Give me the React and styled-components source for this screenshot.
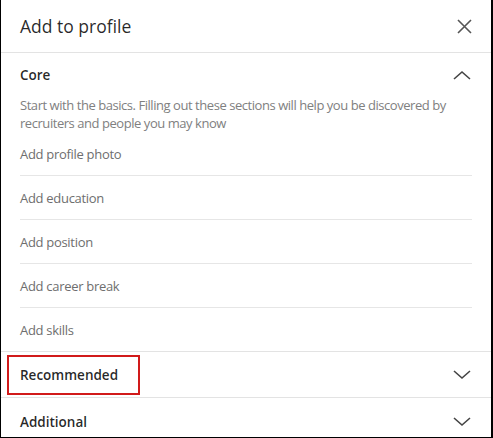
import React from 'react';
import styled, { createGlobalStyle } from 'styled-components';

const Global = createGlobalStyle`
  html, body { margin: 0; padding: 0; background: #fff; }
  body { font-family: "Segoe UI", "Open Sans", "Noto Sans", sans-serif; }
`;

const Modal = styled.div`
  width: 493px;
  height: 438px;
  box-sizing: border-box;
  border-left: 1px solid #000;
  border-right: 2px solid #000;
  border-bottom: 1px solid #000;
  background: #fff;
  overflow: hidden;
  display: flex;
  flex-direction: column;
`;

const Header = styled.div`
  height: 52px;
  flex-shrink: 0;
  display: flex;
  align-items: center;
  justify-content: space-between;
  padding: 0 19px 0 19px;
  border-bottom: 1px solid #e3e3e3;
`;

const Title = styled.h2`
  margin: 0;
  font-size: 17.5px;
  font-weight: 400;
  color: rgba(0, 0, 0, 0.85);
`;

const IconButton = styled.button`
  border: 0;
  background: none;
  padding: 0;
  display: flex;
`;

const Section = styled.div`
  flex-shrink: 0;
  border-bottom: ${p => (p.last ? 'none' : '1px solid #e3e3e3')};
`;

const SectionHead = styled.div`
  height: ${p => p.h}px;
  display: flex;
  align-items: center;
  justify-content: space-between;
  padding: 0 20px 0 19px;
`;

const SectionName = styled.span`
  position: relative;
  font-size: 13.5px;
  line-height: 20px;
  font-weight: 600;
  color: rgba(0, 0, 0, 0.85);
  ${p =>
    p.marked &&
    `
    &::after {
      content: '';
      position: absolute;
      left: -13px;
      right: -22px;
      top: -10px;
      bottom: -10px;
      border: 2px solid #d11a1a;
    }
  `}
`;

const Desc = styled.p`
  margin: 0;
  padding: 0 20px 0 19px;
  font-size: 13px;
  line-height: 18px;
  letter-spacing: -0.45px;
  color: #808080;
`;

const Items = styled.ul`
  list-style: none;
  margin: 0;
  padding: 0 19px;
`;

const Item = styled.li`
  height: 43px;
  display: flex;
  align-items: center;
  font-size: 13px;
  letter-spacing: -0.3px;
  color: #6e6e6e;
  border-bottom: ${p => (p.last ? 'none' : '1px solid #e6e6e6')};
`;

const Chevron = ({ up }) => (
  <svg width="18" height="10" viewBox="0 0 18 10" fill="none">
    <path
      d={up ? 'M1 9 L9 2 L17 9' : 'M1 1 L9 8 L17 1'}
      stroke="#444"
      strokeWidth="1.6"
    />
  </svg>
);

const Close = () => (
  <svg width="15" height="15" viewBox="0 0 15 15" fill="none">
    <path d="M1 1 L14 14 M14 1 L1 14" stroke="#555" strokeWidth="1.6" />
  </svg>
);

const coreItems = [
  'Add profile photo',
  'Add education',
  'Add position',
  'Add career break',
  'Add skills',
];

export default function App() {
  return (
    <>
      <Global />
      <Modal>
        <Header>
          <Title>Add to profile</Title>
          <IconButton>
            <Close />
          </IconButton>
        </Header>

        <Section>
          <SectionHead h={43}>
            <SectionName>Core</SectionName>
            <Chevron up />
          </SectionHead>
          <Desc>
            Start with the basics. Filling out these sections will help you be discovered by
            recruiters and people you may know
          </Desc>
          <Items>
            {coreItems.map((t, i) => (
              <Item key={t} last={i === coreItems.length - 1}>
                {t}
              </Item>
            ))}
          </Items>
        </Section>

        <Section>
          <SectionHead h={45}>
            <SectionName marked>Recommended</SectionName>
            <Chevron />
          </SectionHead>
        </Section>

        <Section last>
          <SectionHead h={48}>
            <SectionName>Additional</SectionName>
            <Chevron />
          </SectionHead>
        </Section>
      </Modal>
    </>
  );
}
